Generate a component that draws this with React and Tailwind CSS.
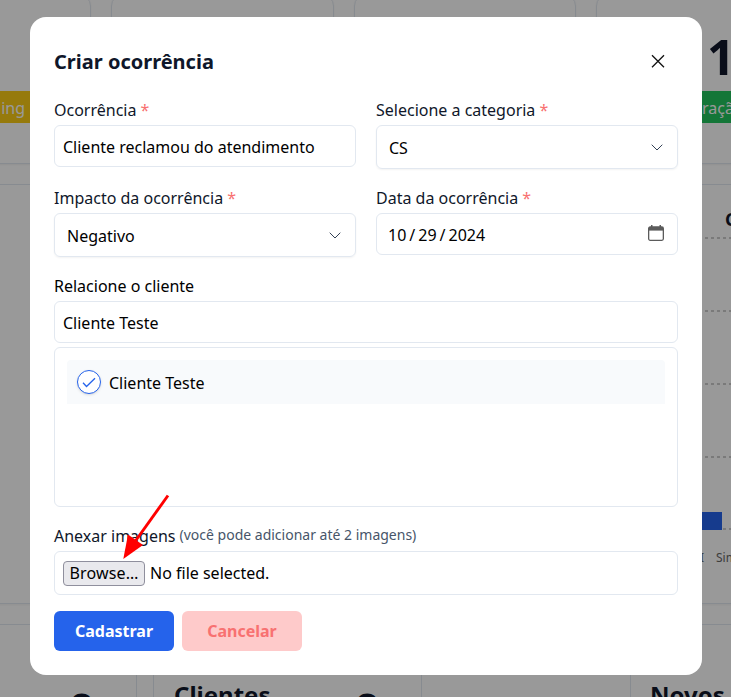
import React from "react";

const gridLines = [54, 127, 200, 273, 345];

function Dashboard() {
  return (
    <div className="flex h-[697px] w-[731px] flex-col gap-5 overflow-hidden bg-white text-[#0f172a]">
      <div className="-mt-1.5 flex h-[170px] shrink-0 gap-5">
        <div className="-ml-4 flex w-[107px] shrink-0 flex-col rounded-xl border border-slate-200 pt-24 shadow-xs">
          <div className="h-8 w-20 bg-[#facc15] pr-[40px] pt-px text-right leading-8 text-white">ing</div>
        </div>
        <div className="w-[223px] shrink-0 rounded-xl border border-slate-200 shadow-xs" />
        <div className="w-[222px] shrink-0 rounded-xl border border-slate-200 shadow-xs" />
        <div className="flex w-[223px] shrink-0 flex-col rounded-xl border border-slate-200 pt-7 shadow-xs">
          <div className="mb-2 ml-[110px] h-[60px] text-[49px] font-bold leading-[67px]">12</div>
          <div className="ml-20 h-8 w-[141px] whitespace-nowrap bg-[#22c55e] pl-[25px] pt-px leading-8 text-white">ração</div>
        </div>
      </div>
      <div className="-mx-6 flex h-[420px] shrink-0 flex-col border border-slate-200 pl-[748px] pt-[22px] shadow-xs">
        <div className="h-0 whitespace-nowrap text-lg font-bold leading-6">Clientes</div>
        <svg className="-ml-[26px] -mt-[23px] h-[400px] w-[60px] shrink-0" viewBox="0 0 60 400">
          {gridLines.map((y) => (
            <line key={y} x1="0" x2="60" y1={y} y2={y} stroke="#ccc" strokeWidth="2" strokeDasharray="3 3" />
          ))}
          <rect x="0" y="328" width="23" height="18" fill="#2563eb" />
          <text x="1" y="378" fontSize="12" fill="#666">I</text>
          <text x="17" y="378" fontSize="12" fill="#666">Sim</text>
        </svg>
      </div>
      <div className="flex h-[120px] shrink-0">
        <div className="-ml-4 mr-4 w-[153px] shrink-0 rounded-r-xl border border-slate-200 pl-[83px] pt-[62px] text-5xl font-bold">0</div>
        <div className="flex w-[269px] shrink-0 justify-between rounded-xl border border-slate-200 pl-5 pr-10 font-bold">
          <span className="pt-[54px] text-2xl">Clientes</span>
          <span className="pt-[62px] text-5xl">0</span>
        </div>
        <div className="ml-[208px] w-[200px] shrink-0 rounded-xl border border-slate-200 pl-[19px] pt-[54px] text-2xl font-bold">Novos</div>
      </div>
    </div>
  );
}

function Field({ label, required, children }) {
  return (
    <div className="flex min-w-0 flex-1 flex-col gap-1">
      <label className="h-6 pt-px text-[#0f172a]">
        {label}
        {required && <span className="text-[#f87171]"> *</span>}
      </label>
      {children}
    </div>
  );
}

function TextBox({ children }) {
  return (
    <div className="flex h-[42px] items-center rounded-md border border-slate-200 px-2 pt-0.5 text-black">{children}</div>
  );
}

function SelectBox({ value }) {
  return (
    <div className="flex h-11 items-center justify-between rounded-md border border-slate-200 px-3 text-black shadow-xs">
      <span className="pt-0.5">{value}</span>
      <svg className="h-4 w-4" viewBox="0 0 16 16" fill="none" stroke="#334155" strokeWidth="1">
        <path d="M2.7 5.7 8 11l5.3-5.3" />
      </svg>
    </div>
  );
}

function Modal() {
  return (
    <div className="flex h-[658px] w-[672px] flex-col gap-4 rounded-2xl bg-white p-6 text-[#0f172a]">
      <div className="flex h-10 items-center justify-between">
        <h2 className="pt-0.5 text-xl font-bold">Criar ocorrência</h2>
        <button className="flex h-10 w-10 items-center justify-center" aria-label="Fechar">
          <svg className="h-4 w-4" viewBox="0 0 16 16" fill="none" stroke="#111" strokeWidth="1.3">
            <path d="m2 2.3 12 12M14 2.3l-12 12" />
          </svg>
        </button>
      </div>
      <div className="flex h-[72px] gap-5">
        <Field label="Ocorrência" required><TextBox>Cliente reclamou do atendimento</TextBox></Field>
        <Field label="Selecione a categoria" required><SelectBox value="CS" /></Field>
      </div>
      <div className="flex h-[72px] gap-5">
        <Field label="Impacto da ocorrência" required><SelectBox value="Negativo" /></Field>
        <Field label="Data da ocorrência" required>
          <div className="flex h-[42px] items-center justify-between rounded-md border border-slate-200 pl-[11px] pr-[13px] pt-0.5 text-black">
            <span className="flex gap-[3px]">
              <span>10</span><span>/</span><span>29</span><span>/</span><span>2024</span>
            </span>
            <svg className="mb-1 h-4 w-4" viewBox="0 0 16 16">
              <path d="M3 0h1.5v2H3zM11.5 0H13v2h-1.5z" fill="#5b5b5b" />
              <rect x=".65" y="1.9" width="14.7" height="13.4" rx="1.5" fill="none" stroke="#5b5b5b" strokeWidth="1.3" />
              <path d="M1 2h14v3.6H1z" fill="#5b5b5b" />
            </svg>
          </div>
        </Field>
      </div>
      <div className="flex flex-col gap-1">
        <span className="h-6 pt-px text-black">Relacione o cliente</span>
        <TextBox>Cliente Teste</TextBox>
        <div className="h-40 rounded-md border border-slate-200 p-3 text-black">
          <div className="flex h-11 items-center gap-2 rounded-t bg-slate-50 px-2.5">
            <span className="flex h-6 w-6 items-center justify-center rounded-full border border-[#2563eb] bg-white shadow">
              <svg className="h-4 w-4" viewBox="0 0 16 16" fill="none" stroke="#2563eb" strokeWidth="1.3">
                <path d="m2 8.8 3.5 3.7L14 4.2" />
              </svg>
            </span>
            <span className="pt-0.5">Cliente Teste</span>
          </div>
        </div>
      </div>
      <div className="flex flex-col gap-1">
        <div className="flex h-6 items-center gap-1">
          <span className="pt-0.5">Anexar imagens</span>
          <span className="text-sm text-[#475569]">(você pode adicionar até 2 imagens)</span>
        </div>
        <div className="flex h-11 items-center gap-[5px] rounded-md border border-slate-200 px-2 text-black">
          <button className="h-[25px] w-[82px] rounded border border-[#8f8f9d] bg-[#e9e9ed] leading-[23px] tracking-[0.15px]">Browse…</button>
          <span>No file selected.</span>
        </div>
      </div>
      <div className="flex h-10 gap-2 font-bold">
        <button className="w-[120px] rounded-md bg-[#2563eb] text-white">Cadastrar</button>
        <button className="w-[120px] rounded-md bg-[#fecaca] text-[#f87171]">Cancelar</button>
      </div>
    </div>
  );
}

export default function App() {
  return (
    <div className="relative h-[697px] w-[731px] overflow-hidden font-['Noto_Sans',sans-serif] text-base">
      <Dashboard />
      <div className="absolute inset-0 bg-black/40 pl-[30px] pt-[17px]">
        <Modal />
      </div>
      <svg className="absolute left-[120px] top-[490px] h-[72px] w-[54px]" viewBox="0 0 54 72">
        <path d="M48 5.5 14 53" stroke="#f00" strokeWidth="2.9" />
        <path d="M3.3 69 8 44.5 23 55z" fill="#f00" />
      </svg>
    </div>
  );
}
